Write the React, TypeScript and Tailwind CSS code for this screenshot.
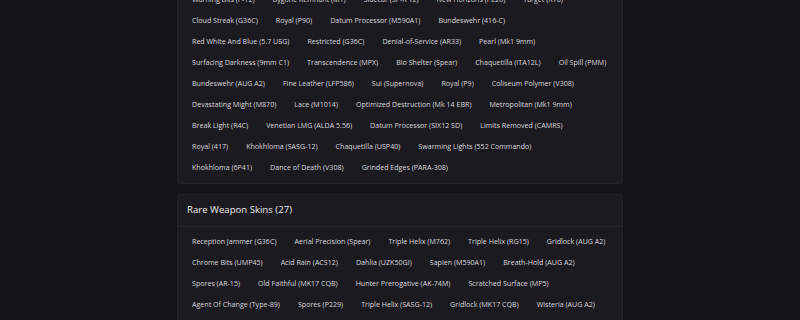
const uncommonRows = [
  ['Warning Bits (P-12)', 'Bygone Remnant (M1)', 'Sidecar (SP-R 12)', 'New Horizons (P226)', 'Target (R76)'],
  ['Cloud Streak (G36C)', 'Royal (P90)', 'Datum Processor (M590A1)', 'Bundeswehr (416-C)'],
  ['Red White And Blue (5.7 USG)', 'Restricted (G36C)', 'Denial-of-Service (AR33)', 'Pearl (Mk1 9mm)'],
  ['Surfacing Darkness (9mm C1)', 'Transcendence (MPX)', 'Bio Shelter (Spear)', 'Chaquetilla (ITA12L)', 'Oil Spill (PMM)'],
  ['Bundeswehr (AUG A2)', 'Fine Leather (LFP586)', 'Sui (Supernova)', 'Royal (P9)', 'Coliseum Polymer (V308)'],
  ['Devastating Might (M870)', 'Lace (M1014)', 'Optimized Destruction (Mk 14 EBR)', 'Metropolitan (Mk1 9mm)'],
  ['Break Light (R4C)', 'Venetian LMG (ALDA 5.56)', 'Datum Processor (SIX12 SD)', 'Limits Removed (CAMRS)'],
  ['Royal (417)', 'Khokhloma (SASG-12)', 'Chaquetilla (USP40)', 'Swarming Lights (552 Commando)'],
  ['Khokhloma (6P41)', 'Dance of Death (V308)', 'Grinded Edges (PARA-308)'],
];

const rareRows = [
  ['Reception Jammer (G36C)', 'Aerial Precision (Spear)', 'Triple Helix (M762)', 'Triple Helix (RG15)', 'Gridlock (AUG A2)'],
  ['Chrome Bits (UMP45)', 'Acid Rain (ACS12)', 'Dahlia (UZK50GI)', 'Sapien (M590A1)', 'Breath-Hold (AUG A2)'],
  ['Spores (AR-15)', 'Old Faithful (MK17 CQB)', 'Hunter Prerogative (AK-74M)', 'Scratched Surface (MP5)'],
  ['Agent Of Change (Type-89)', 'Spores (P229)', 'Triple Helix (SASG-12)', 'Gridlock (MK17 CQB)', 'Wisteria (AUG A2)'],
  ['Hollow Point (F2)', 'Tidal Wave (P10C)', 'Night Shift (SR-25)', 'Circuit Board (L85A2)'],
  ['Sandstorm (TCSG12)', 'Cobalt Rush (Mk1 9mm)', 'Glass Shards (C8-SFW)', 'Fever Dream (SC)'],
];

function SkinCard({ title, rows }: { title: string; rows: string[][] }) {
  const count = rows.reduce((total, row) => total + row.length, 0);

  return (
    <section className="rounded-[2px] border border-[#222126] bg-[#1b1a1e]">
      <header className="flex h-[32px] items-center border-b border-[#26252a] px-[9px]">
        <h2 className="text-[9.6px] font-medium text-[#ececef]">
          {title} ({count})
        </h2>
      </header>
      <div className="flex flex-col px-[14px] pb-[5px] pt-[4px]">
        {rows.map((row, i) => (
          <ul key={i} className="flex gap-x-[18px]">
            {row.map((skin) => (
              <li key={skin} className="whitespace-nowrap py-[4px] text-[7.1px] font-medium leading-[13px] text-[#d8d8dc]">
                {skin}
              </li>
            ))}
          </ul>
        ))}
      </div>
    </section>
  );
}

export default function App() {
  return (
    <div
      className="h-[320px] overflow-hidden bg-[#141316]"
      style={{ fontFamily: '"Open Sans", "Liberation Sans", sans-serif' }}
    >
      <div className="mx-auto -mt-[48px] flex w-[446px] flex-col gap-[10px]">
        <SkinCard title="Uncommon Weapon Skins" rows={uncommonRows} />
        <SkinCard title="Rare Weapon Skins" rows={rareRows} />
      </div>
    </div>
  );
}
